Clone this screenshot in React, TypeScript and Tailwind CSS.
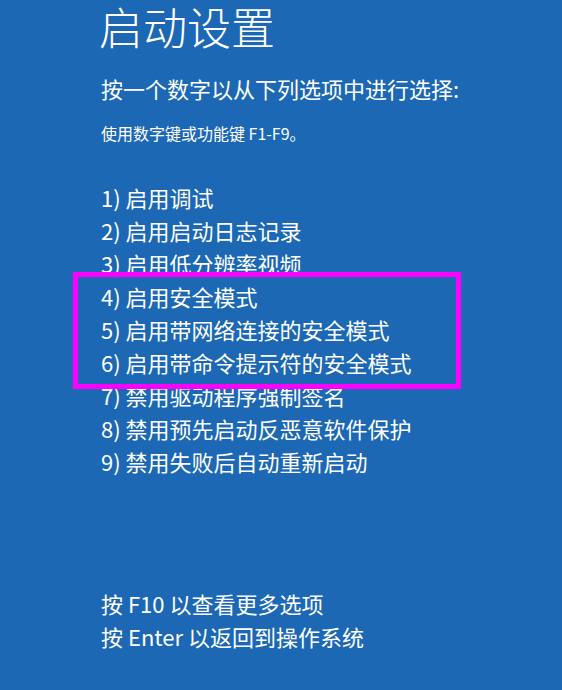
const options = [
  '1) 启用调试',
  '2) 启用启动日志记录',
  '3) 启用低分辨率视频',
  '4) 启用安全模式',
  '5) 启用带网络连接的安全模式',
  '6) 启用带命令提示符的安全模式',
  '7) 禁用驱动程序强制签名',
  '8) 禁用预先启动反恶意软件保护',
  '9) 禁用失败后自动重新启动',
]

function Option({ label }: { label: string }) {
  return <div className="h-[33px] text-[22px] leading-[33px] whitespace-nowrap">{label}</div>
}

export default function App() {
  return (
    <div
      className="w-[562px] h-[690px] overflow-hidden bg-[#1c68b4] text-white pl-[101px]"
      style={{ fontFamily: '"Noto Sans CJK SC", "Noto Sans", sans-serif' }}
    >
      <h1 className="text-[44px] leading-[52px] font-light -ml-[2px]">启动设置</h1>
      <div className="mt-[20px] text-[22px] leading-[32px]">按一个数字以从下列选项中进行选择:</div>
      <div className="mt-[18px] text-[16px] leading-[22px]">使用数字键或功能键 F1-F9。</div>

      <div className="mt-[37px] flex flex-col">
        {options.slice(0, 3).map((o) => (
          <Option key={o} label={o} />
        ))}
        <div className="relative">
          {options.slice(3, 6).map((o) => (
            <Option key={o} label={o} />
          ))}
          {/* highlight annotation */}
          <span className="pointer-events-none absolute -left-[28px] -top-[8px] w-[388px] h-[117px] border-[5px] border-[#ff00ff]" />
        </div>
        {options.slice(6).map((o) => (
          <Option key={o} label={o} />
        ))}
      </div>

      <div className="mt-[109px] flex flex-col">
        <div className="h-[33px] text-[22px] leading-[33px]">按 F10 以查看更多选项</div>
        <div className="h-[33px] text-[22px] leading-[33px]">按 Enter 以返回到操作系统</div>
      </div>
    </div>
  )
}
